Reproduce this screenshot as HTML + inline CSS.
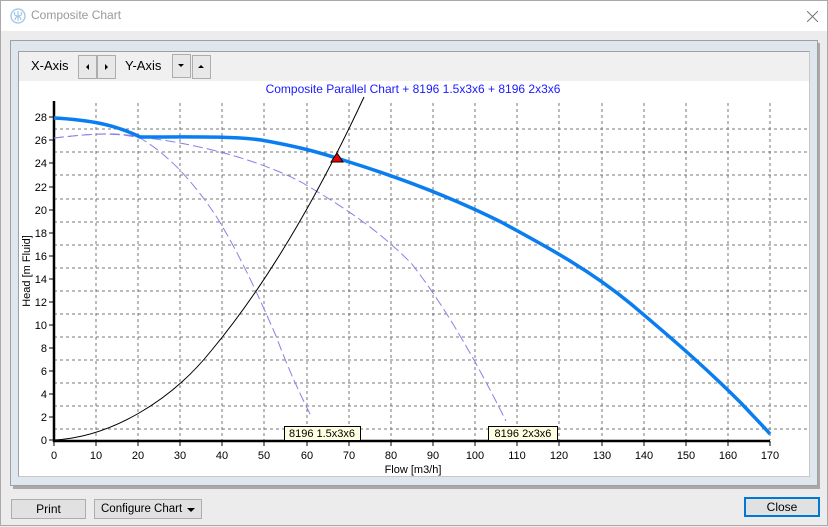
<!DOCTYPE html>
<html><head><meta charset="utf-8"><style>
*{margin:0;padding:0;box-sizing:border-box}
body{width:828px;height:526px;background:#ececec;font-family:"Liberation Sans",sans-serif;position:relative;overflow:hidden;border:1px solid #aaa}
.title{position:absolute;left:0;top:0;width:826px;height:30px;background:#fff}
.title span{position:absolute;left:30px;top:7px;font-size:12px;color:#999}
.btn{position:absolute;background:#e1e1e1;border:1px solid #adadad;font-size:12px;color:#000;text-align:center}
.sb{position:absolute;width:19px;height:24px;background:#e8e8e8;border:1px solid #adadad}
</style></head><body>
<div class="title">
<svg style="position:absolute;left:9px;top:7px" width="16" height="16" viewBox="0 0 16 16"><circle cx="8" cy="8" r="7" fill="none" stroke="#9fc3e6" stroke-width="1.3"/><path d="M8 3v10M5 4c-2 3 1 4 3 4M11 4c2 3-1 4-3 4M5 12c0-2 1-3 3-4M11 12c0-2-1-3-3-4" fill="none" stroke="#9fc3e6" stroke-width="1.1"/></svg>
<span>Composite Chart</span>
<svg style="position:absolute;left:806px;top:10px" width="11" height="11"><path d="M0 0L11 11M11 0L0 11" stroke="#777" stroke-width="1"/></svg>
</div>
<div style="position:absolute;left:12px;top:42px;width:807px;height:446px;background:#a9a9a9"></div>
<div style="position:absolute;left:9px;top:39px;width:808px;height:446px;background:#dfe6ee;border:1px solid #a0a0a0"></div>
<div style="position:absolute;left:17px;top:50px;width:792px;height:426px;background:#fff;border:1px solid #a0a0a0;border-right-color:#c8c8c8;border-bottom-color:#c8c8c8"></div>
<div style="position:absolute;left:18px;top:51px;width:790px;height:29px;background:#f0f0f0"></div>
<div style="position:absolute;left:30px;top:57px;font-size:13px">X-Axis</div>
<div class="sb" style="left:77px;top:54px"><svg width="17" height="22"><path d="M10 8v6l-3-3z" fill="#000"/></svg></div>
<div class="sb" style="left:96px;top:54px"><svg width="17" height="22"><path d="M7 8v6l3-3z" fill="#000"/></svg></div>
<div style="position:absolute;left:124px;top:57px;font-size:13px">Y-Axis</div>
<div class="sb" style="left:171px;top:53px"><svg width="17" height="22"><path d="M5 9h6l-3 3z" fill="#000"/></svg></div>
<div class="sb" style="left:191px;top:54px"><svg width="17" height="22"><path d="M5 12h6l-3-3z" fill="#000"/></svg></div>
<svg style="position:absolute;left:0;top:0" width="828" height="526">
<text x="412" y="92" font-size="12" fill="#1a1aff" text-anchor="middle" font-family="Liberation Sans">Composite Parallel Chart + 8196 1.5x3x6 + 8196 2x3x6</text>
<g stroke="#777" stroke-dasharray="3,3" stroke-width="1">
<path d="M95 102V439M137 102V439M179 102V439M221 102V439M263 102V439M306 102V439M348 102V439M390 102V439M432 102V439M474 102V439M516 102V439M558 102V439M601 102V439M643 102V439M685 102V439M727 102V439M769 102V439"/>
<path d="M53 428H807M53 405H807M53 382H807M53 359H807M53 336H807M53 313H807M53 290H807M53 267H807M53 244H807M53 221H807M53 198H807M53 174H807M53 151H807M53 128H807"/>
</g>
<path d="M53 100V440H769" fill="none" stroke="#000" stroke-width="2.5"/>
<g stroke="#000" stroke-width="1">
<path d="M48 439h5M48 416h5M48 393h5M48 370h5M48 347h5M48 324h5M48 301h5M48 278h5M48 255h5M48 232h5M48 209h5M48 186h5M48 162h5M48 139h5M48 116h5"/>
<path d="M53 440v5M95 440v5M137 440v5M179 440v5M221 440v5M263 440v5M306 440v5M348 440v5M390 440v5M432 440v5M474 440v5M516 440v5M558 440v5M601 440v5M643 440v5M685 440v5M727 440v5M769 440v5"/>
</g>
<g font-size="11" font-family="Liberation Sans" text-anchor="end" fill="#000">
<text x="46" y="443">0</text><text x="46" y="420">2</text><text x="46" y="397">4</text><text x="46" y="374">6</text><text x="46" y="351">8</text><text x="46" y="328">10</text><text x="46" y="305">12</text><text x="46" y="282">14</text><text x="46" y="259">16</text><text x="46" y="236">18</text><text x="46" y="213">20</text><text x="46" y="190">22</text><text x="46" y="166">24</text><text x="46" y="143">26</text><text x="46" y="120">28</text>
</g>
<g font-size="11" font-family="Liberation Sans" text-anchor="middle" fill="#000">
<text x="53" y="458">0</text><text x="95" y="458">10</text><text x="137" y="458">20</text><text x="179" y="458">30</text><text x="221" y="458">40</text><text x="263" y="458">50</text><text x="306" y="458">60</text><text x="348" y="458">70</text><text x="390" y="458">80</text><text x="432" y="458">90</text><text x="474" y="458">100</text><text x="516" y="458">110</text><text x="558" y="458">120</text><text x="601" y="458">130</text><text x="643" y="458">140</text><text x="685" y="458">150</text><text x="727" y="458">160</text><text x="769" y="458">170</text>
<text x="412" y="472">Flow [m3/h]</text>
<text transform="translate(29,270) rotate(-90)">Head [m Fluid]</text>
</g>
<g fill="none" stroke-linejoin="round">
<path stroke="#8a80e6" stroke-width="1" stroke-dasharray="10,4" d="M53 137C80 134 110 130 139 137C170 155 195 185 215 215C240 255 262 305 275 335C288 370 300 395 310 415"/>
<path stroke="#8a80e6" stroke-width="1" stroke-dasharray="10,4" d="M53 137C80 134 110 130 139 136C200 143 260 160 300 181C350 210 380 232 410 262C440 300 470 350 505 420"/>
<path stroke="#000" stroke-width="1" d="M53 439C110 436 170 400 210 350C260 290 310 210 363 96"/>
<path stroke="#0a7ef0" stroke-width="3.5" d="M53 117C90 119 115 124 139 136C190 136 230 135 260 139C300 146 320 152 345 160C400 177 450 196 500 221C550 248 590 270 630 303C680 345 710 372 740 402C755 418 763 426 769 433"/>
</g>
<path d="M330 161L336 152L342 161Z" fill="#e00" stroke="#000" stroke-width="1"/>
<rect x="283.5" y="425.5" width="76" height="14" fill="#ffffe1" stroke="#000"/>
<text x="321" y="436" font-size="11" text-anchor="middle" font-family="Liberation Sans">8196 1.5x3x6</text>
<rect x="487.5" y="425.5" width="69" height="14" fill="#ffffe1" stroke="#000"/>
<text x="522" y="436" font-size="11" text-anchor="middle" font-family="Liberation Sans">8196 2x3x6</text>
</svg>
<div class="btn" style="left:10px;top:498px;width:75px;height:20px;line-height:18px">Print</div>
<div class="btn" style="left:93px;top:498px;width:108px;height:20px;line-height:18px;text-align:left;padding-left:6px;font-size:11.5px">Configure Chart<svg style="position:absolute;right:6px;top:8px" width="8" height="5"><path d="M0 0h8L4 4z" fill="#000"/></svg></div>
<div class="btn" style="left:743px;top:496px;width:76px;height:20px;line-height:16px;border:2px solid #0078d7">Close</div>
</body></html>
